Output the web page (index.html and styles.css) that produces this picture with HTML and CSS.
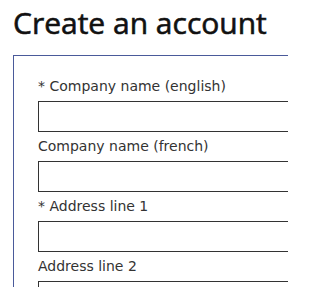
FILE: index.html
```html
<!DOCTYPE html>
<html>
<head>
<meta charset="utf-8">
<link rel="stylesheet" href="styles.css">
</head>
<body>
<h1 class="title">Create an account</h1>
<div class="frame">
  <div class="field">
    <label class="label">* Company name (english)</label>
    <input class="input" type="text">
  </div>
  <div class="field">
    <label class="label">Company name (french)</label>
    <input class="input" type="text">
  </div>
  <div class="field">
    <label class="label">* Address line 1</label>
    <input class="input" type="text">
  </div>
  <div class="field">
    <label class="label">Address line 2</label>
    <input class="input" type="text">
  </div>
</div>
</body>
</html>
```
FILE: styles.css
```css
html, body {
  margin: 0;
  padding: 0;
  background: #fff;
  overflow: hidden;
  width: 288px;
  height: 288px;
}
.title {
  margin: 0 0 0 13px;
  padding-top: 3px;
  height: 55px;
  box-sizing: border-box;
  font-family: "Open Sans", sans-serif;
  font-weight: 400;
  font-size: 30px;
  line-height: 40px;
  color: #111;
  -webkit-text-stroke: 0.6px #111;
  white-space: nowrap;
  overflow: hidden;
}
.frame {
  box-sizing: border-box;
  margin-left: 13px;
  width: 275px;
  height: 232px;
  overflow: hidden;
  border: 1px solid #4a5a9a;
  border-right: none;
  border-bottom: none;
  padding: 22px 0 0 24px;
}
.field {
  display: flex;
  flex-direction: column;
}
.label {
  font-family: "DejaVu Sans", Verdana, sans-serif;
  font-size: 14px;
  line-height: 17px;
  color: #333;
  margin-bottom: 6px;
  white-space: nowrap;
}
.input {
  box-sizing: border-box;
  height: 31px;
  width: 260px;
  margin: 0 0 6px 0;
  padding: 0;
  border: 1px solid #333;
  border-right: none;
  background: #fff;
  outline: none;
}
```
